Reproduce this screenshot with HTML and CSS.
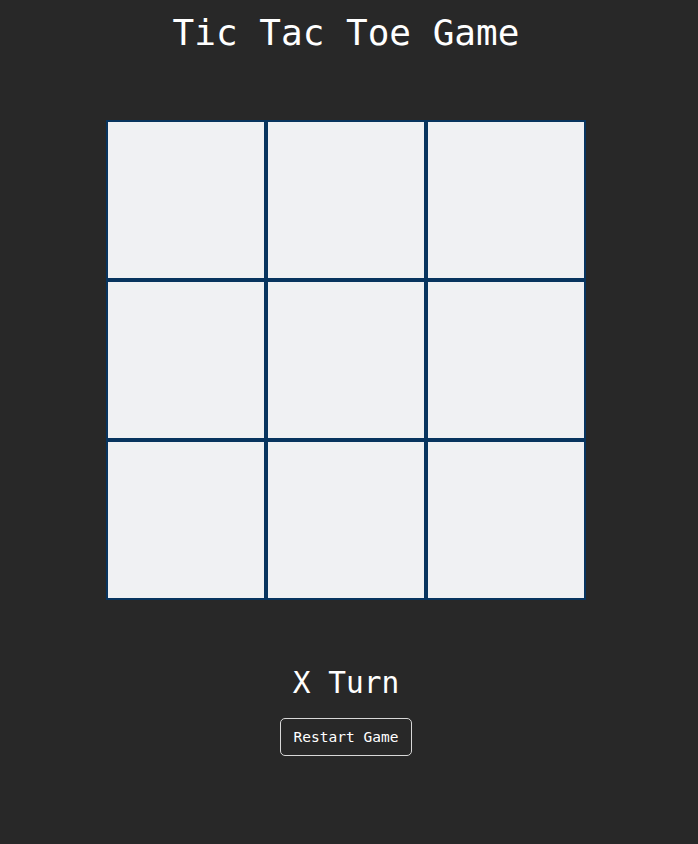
FILE: index.html
```html
<!DOCTYPE html>
<html lang="en">
<head>
<meta charset="utf-8">
<title>Tic Tac Toe Game</title>
<link rel="stylesheet" href="styles.css">
</head>
<body>
<main class="game">
  <h1 class="title">Tic Tac Toe Game</h1>
  <div class="board">
    <div class="cell"></div>
    <div class="cell"></div>
    <div class="cell"></div>
    <div class="cell"></div>
    <div class="cell"></div>
    <div class="cell"></div>
    <div class="cell"></div>
    <div class="cell"></div>
    <div class="cell"></div>
  </div>
  <h2 class="status">X Turn</h2>
  <button class="restart">Restart Game</button>
</main>
</body>
</html>
```
FILE: styles.css
```css
html, body {
  margin: 0;
  padding: 0;
  background: #282828;
  color: #ffffff;
  font-family: "DejaVu Sans Mono", "Liberation Mono", monospace;
}
body {
  padding-right: 6px;
  min-height: 844px;
  box-sizing: border-box;
}
.game {
  display: flex;
  flex-direction: column;
  align-items: center;
}
.title {
  margin: 11px 0 0;
  font-size: 36px;
  line-height: 44px;
  font-weight: normal;
}
.board {
  margin-top: 65px;
  display: grid;
  grid-template-columns: repeat(3, 160px);
  grid-template-rows: repeat(3, 160px);
}
.cell {
  box-sizing: border-box;
  border: 2px solid #08345e;
  background: #f0f1f3;
}
.status {
  margin: 65px 0 0;
  font-size: 29.5px;
  line-height: 36px;
  font-weight: normal;
}
.restart {
  margin-top: 17px;
  box-sizing: border-box;
  width: 132px;
  height: 38px;
  padding: 0;
  border: 1px solid #d8d8d8;
  border-radius: 5px;
  background: transparent;
  color: #ffffff;
  font-family: "DejaVu Sans Mono", "Liberation Mono", monospace;
  font-size: 14.5px;
  line-height: 36px;
  cursor: pointer;
}
```
